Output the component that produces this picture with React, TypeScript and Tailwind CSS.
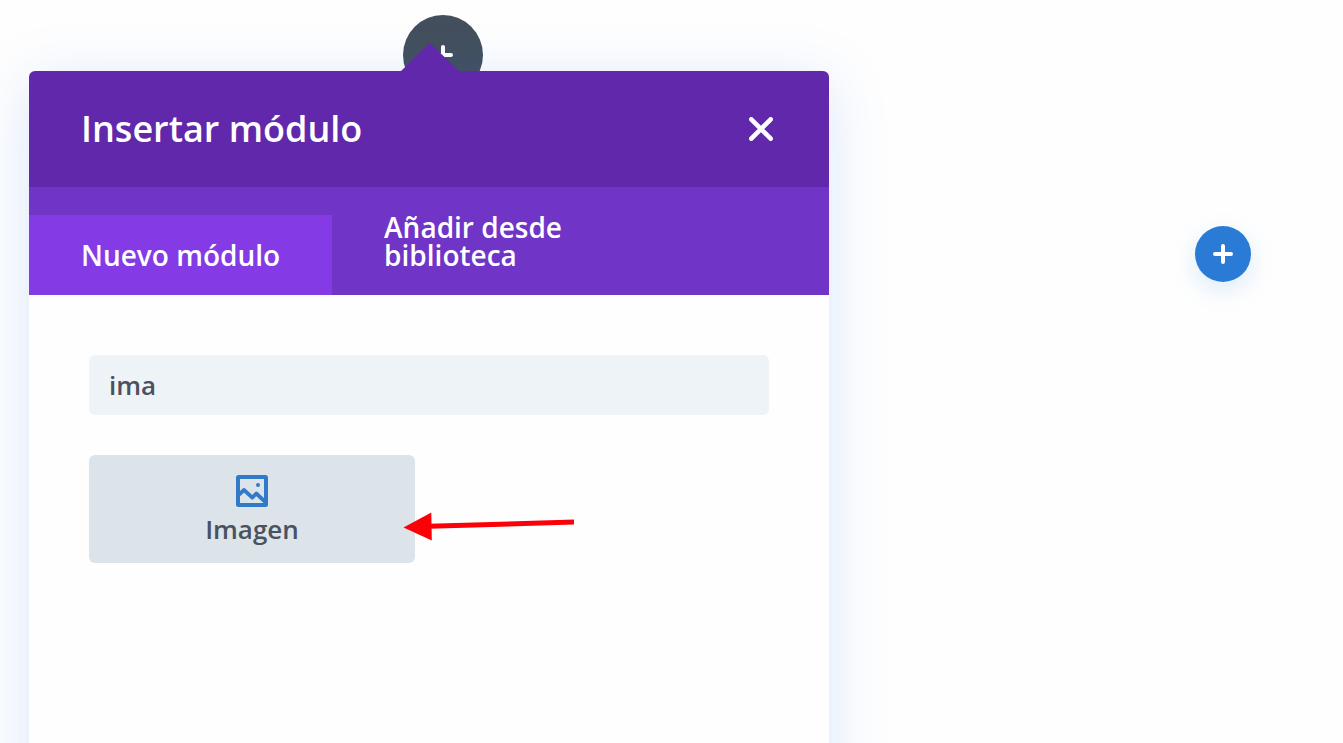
import React, { useState } from 'react';

interface Module {
  id: string;
  name: string;
}

const MODULES: Module[] = [{ id: 'image', name: 'Imagen' }];

const PlusIcon: React.FC<{ className?: string }> = ({ className }) => (
  <svg viewBox="0 0 20 20" className={className} fill="none" stroke="currentColor" strokeWidth="4" strokeLinecap="round" aria-hidden="true">
    <path d="M10 2v16M2 10h16" />
  </svg>
);

const CloseIcon: React.FC<{ className?: string }> = ({ className }) => (
  <svg viewBox="0 0 24 24" className={className} fill="none" stroke="currentColor" strokeWidth="4.6" strokeLinecap="round" aria-hidden="true">
    <path d="M2.3 2.3l19.4 19.4M21.7 2.3L2.3 21.7" />
  </svg>
);

const ImageIcon: React.FC<{ className?: string }> = ({ className }) => (
  <svg viewBox="0 0 32 32" className={className} fill="none" stroke="currentColor" strokeWidth="4" aria-hidden="true">
    <rect x="2" y="2" width="28" height="28" rx="0.5" />
    <path d="M2 20.5l6-5.5 8.3 7.6 4-4.1L30 27.7" strokeWidth="3.8" strokeLinejoin="round" />
    <circle cx="22" cy="10" r="2" fill="currentColor" stroke="none" />
  </svg>
);

const PointerArrow: React.FC<{ className?: string }> = ({ className }) => (
  <svg viewBox="0 0 172 30" className={className} aria-hidden="true">
    <path d="M26 15.3L171 11" stroke="#fb0007" strokeWidth="5" />
    <path d="M0.5 16.5L28.3 1.5l0.5 28z" fill="#fb0007" />
  </svg>
);

const App: React.FC = () => {
  const [query, setQuery] = useState('ima');
  const [tab, setTab] = useState('new');

  const results = MODULES.filter(m => m.name.toLowerCase().includes(query.toLowerCase()));

  return (
    <main className="flex h-screen items-start justify-between overflow-hidden bg-[#fefefe] pl-[29px] pr-[92px] pt-[71px] font-['Open_Sans',sans-serif] font-semibold">
      <div className="relative w-full max-w-[800px]">
        <button
          type="button"
          aria-label="Añadir módulo"
          className="absolute -top-14 left-[374px] flex h-20 w-20 items-center justify-center rounded-full bg-[#434f5d] text-white"
        >
          <PlusIcon className="h-5 w-5" />
        </button>

        <section
          role="dialog"
          aria-labelledby="modal-title"
          className="relative flex min-h-screen flex-col rounded-md bg-[#fefefe] shadow-[0_10px_60px_rgba(43,120,235,0.17)]"
        >
          <svg viewBox="0 0 58 28" className="absolute -top-7 left-[372px] h-7 w-[58px] text-[#6128ab]" aria-hidden="true">
            <path d="M0 28L29 0l29 28z" fill="currentColor" />
          </svg>

          <header className="flex h-[116px] items-center justify-between rounded-t-md bg-[#6128ab] pl-[52px] pr-14 text-white">
            <h1 id="modal-title" className="text-4xl">Insertar módulo</h1>
            <button type="button" aria-label="Cerrar">
              <CloseIcon className="h-6 w-6" />
            </button>
          </header>

          <div role="tablist" className="flex h-[108px] items-end bg-[#7034c7] text-left text-[28px] leading-7 text-white">
            <button
              type="button"
              role="tab"
              aria-selected={tab === 'new'}
              onClick={() => setTab('new')}
              className="h-20 bg-[#843be5] px-[52px]"
            >
              Nuevo módulo
            </button>
            <button
              type="button"
              role="tab"
              aria-selected={tab === 'library'}
              onClick={() => setTab('library')}
              className="h-[108px] w-[300px] px-[52px] text-left"
            >
              Añadir desde biblioteca
            </button>
          </div>

          <div className="flex flex-col gap-10 p-[60px] text-[26px] text-[#4a5260]">
            <input
              type="text"
              aria-label="Buscar módulo"
              value={query}
              onChange={e => setQuery(e.target.value)}
              className="h-[60px] w-full rounded-md bg-[#eef3f8] px-5 outline-none"
            />
            <div className="relative">
              <ul className="grid grid-cols-2 gap-7">
                {results.map(m => (
                  <li key={m.id}>
                    <button
                      type="button"
                      className="flex h-[108px] w-full flex-col items-center gap-1 rounded-md bg-[#dce3e9] pt-5"
                    >
                      <ImageIcon className="h-8 w-8 text-[#2f7bc9]" />
                      <span className="leading-9">{m.name}</span>
                    </button>
                  </li>
                ))}
              </ul>
              <PointerArrow className="absolute left-[314px] top-14 h-[30px] w-[172px]" />
            </div>
          </div>
        </section>
      </div>

      <button
        type="button"
        aria-label="Añadir fila"
        className="mt-[155px] flex h-14 w-14 shrink-0 items-center justify-center rounded-full bg-[#2a7bd5] text-white shadow-[0_8px_24px_rgba(43,135,218,0.16)]"
      >
        <PlusIcon className="h-5 w-5" />
      </button>
    </main>
  );
};

export default App;
